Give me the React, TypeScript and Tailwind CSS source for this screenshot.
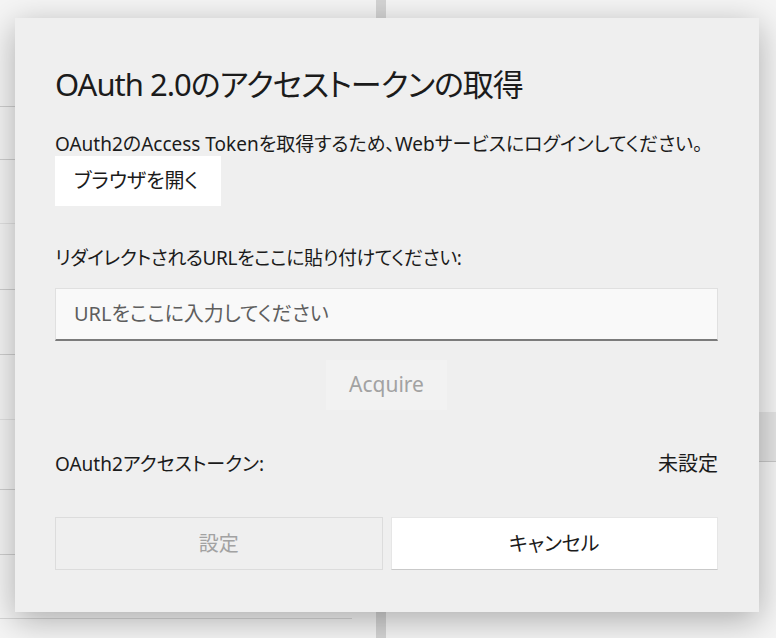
import React from 'react'

// OAuth token dialog over a dimmed list/detail page

const FONT = "[font-family:'Noto_Sans','Noto_Sans_CJK_JP',sans-serif] [font-feature-settings:'palt']"

function Backdrop() {
  // left list rows (only the sliver left of the dialog shows)
  const rows = [
    { h: 'h-[107px]', line: 'border-[#cfcfcf]' },
    { h: 'h-[53px]', line: 'border-[#cfcfcf]' },
    { h: 'h-[64px]', line: 'border-[#e2e2e2]' },
    { h: 'h-[66px]', line: 'border-[#cfcfcf]' },
    { h: 'h-[65px]', line: 'border-[#cfcfcf]' },
    { h: 'h-[65px]', line: 'border-[#e2e2e2]' },
    { h: 'h-[70px]', line: 'border-[#cfcfcf]' },
    { h: 'h-[65px]', line: 'border-[#cfcfcf]' },
  ]
  return (
    <div className="flex h-[638px] w-[776px] bg-[#f5f5f5]">
      <div className="flex w-[376px] flex-col">
        {rows.map((r, i) => (
          <div key={i} className={`${r.h} border-b ${r.line}`} />
        ))}
        <div className="h-[64px] w-[352px] border-b border-[#d6d6d6]" />
      </div>
      <div className="w-[10px] bg-[#d4d4d4]" />
      <div className="flex flex-1 flex-col">
        <div className="h-[412px]" />
        <div className="h-[50px] border-b border-[#c8c8c8] bg-[#e4e4e4]" />
      </div>
    </div>
  )
}

export default function App() {
  return (
    <div className={`relative h-[638px] w-[776px] overflow-hidden ${FONT}`}>
      <Backdrop />

      <div className="absolute left-[15px] top-[18px] flex h-[594px] w-[744px] flex-col bg-[#efefef] pl-[40px] pr-[41px] pt-[46px] text-[#1b1b1b] shadow-[0_8px_32px_rgba(0,0,0,0.3)]">
        <h1 className="text-[31px] leading-[40px] tracking-[-1px]">OAuth 2.0のアクセストークンの取得</h1>

        <p className="mt-[28px] whitespace-nowrap text-[19px] leading-[24px]">
          OAuth2のAccess Tokenを取得するため、Webサービスにログインしてください。
        </p>
        <button className="flex h-[50px] w-[166px] items-center bg-white pl-[19px] text-[20px]">
          ブラウザを開く
        </button>

        <p className="mt-[40px] text-[19px] leading-[24px] tracking-[-0.4px]">
          リダイレクトされるURLをここに貼り付けてください:
        </p>
        <div className="mt-[18px] flex h-[53px] items-center border border-b-2 border-[#e0e0e0] border-b-[#7b7b7b] bg-[#f9f9f9] pl-[18px] text-[20px] text-[#5e5e5e]">
          URLをここに入力してください
        </div>

        <div className="mt-[19px] flex justify-center">
          <button className="h-[50px] w-[121px] bg-[#f2f2f2] text-[21px] text-[#a2a2a2]">Acquire</button>
        </div>

        <div className="mt-[42px] flex items-center justify-between text-[19px] leading-[24px]">
          <span>OAuth2アクセストークン:</span>
          <span className="text-[20px]">未設定</span>
        </div>

        <div className="mt-[41px] grid grid-cols-2 gap-[8px]">
          <button className="h-[53px] border border-[#dcdcdc] bg-[#efefef] text-[20px] text-[#a2a2a2]">設定</button>
          <button className="h-[53px] border border-[#e6e6e6] border-b-[#c9c9c9] bg-white text-[20px] text-[#1b1b1b]">キャンセル</button>
        </div>
      </div>
    </div>
  )
}
